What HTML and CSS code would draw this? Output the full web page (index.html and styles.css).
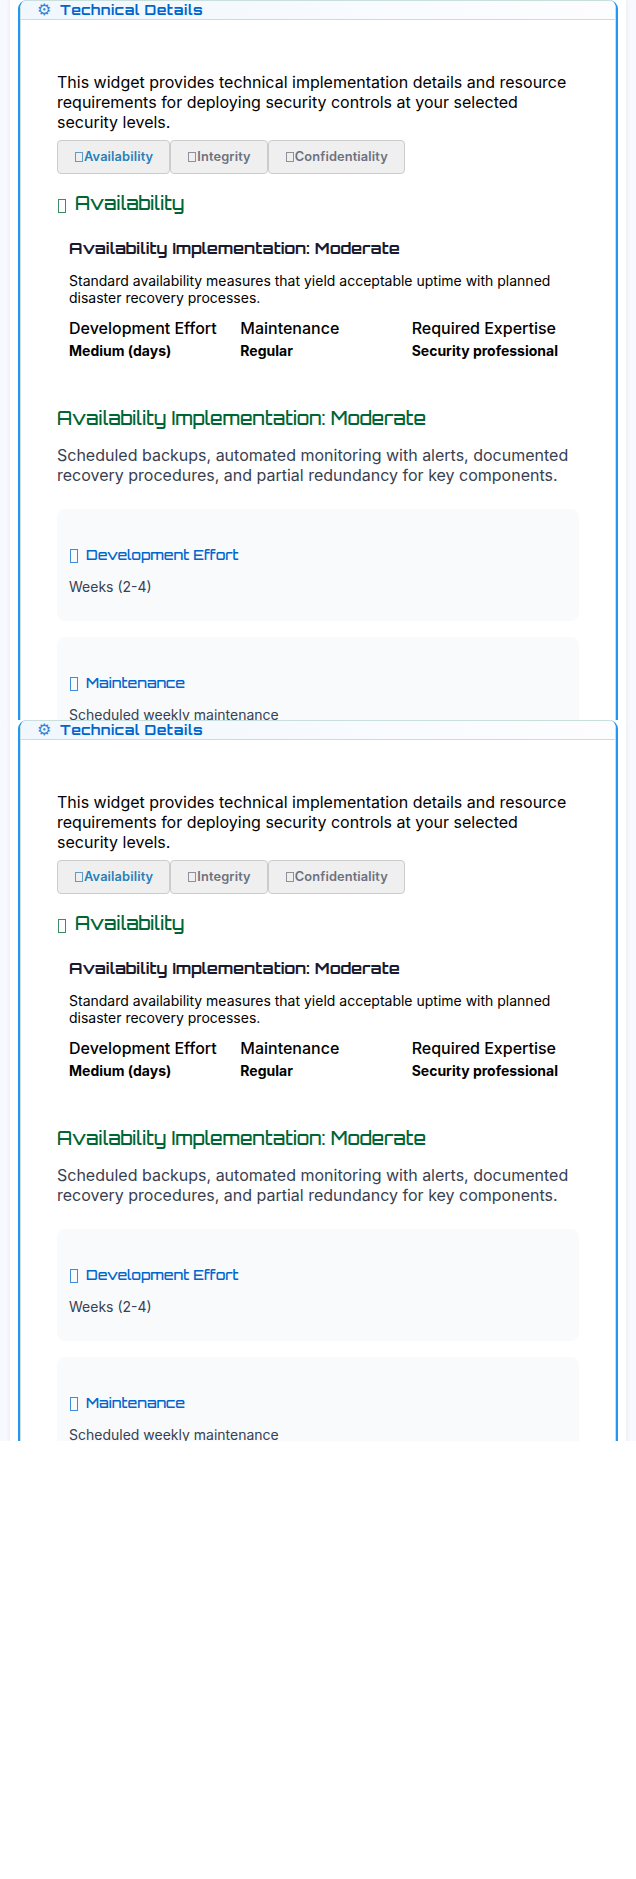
FILE: index.html
```
<!DOCTYPE html>
<html lang="en">
<head>
<meta charset="utf-8">
<title>Technical Details</title>
<link rel="stylesheet" href="styles.css">
</head>
<body>
<div class="view">
  <div class="page"><section class="frame"><div class="widget">
    <header class="bar"><span class="gear">⚙</span><h2 class="display bar-title">Technical Details</h2></header>
    <div class="content">
      <p class="intro">This widget provides technical implementation details and resource requirements for deploying security controls at your selected security levels.</p>
      <div class="tabs">
        <button class="tab active"><i class="box small"></i>Availability</button><button class="tab"><i class="box small"></i>Integrity</button><button class="tab"><i class="box small"></i>Confidentiality</button>
      </div>
      <h3 class="display section-title"><i class="box"></i><span>Availability</span></h3>
      <div class="summary">
        <h4 class="display summary-title">Availability Implementation: Moderate</h4>
        <p class="summary-text">Standard availability measures that yield acceptable uptime with planned disaster recovery processes.</p>
        <div class="metrics">
          <div><div class="label">Development Effort</div><div class="value">Medium (days)</div></div>
          <div><div class="label">Maintenance</div><div class="value">Regular</div></div>
          <div><div class="label">Required Expertise</div><div class="value">Security professional</div></div>
        </div>
      </div>
      <h3 class="display detail-title">Availability Implementation: Moderate</h3>
      <p class="detail-text">Scheduled backups, automated monitoring with alerts, documented recovery procedures, and partial redundancy for key components.</p>
      <div class="cards">
        <article class="card"><h4 class="display card-title"><i class="box"></i><span>Development Effort</span></h4><p class="card-text">Weeks (2-4)</p></article>
        <article class="card"><h4 class="display card-title"><i class="box"></i><span>Maintenance</span></h4><p class="card-text">Scheduled weekly maintenance</p></article>
      </div>
    </div>
  </div></section></div>
</div>
<div class="view last">
  <div class="page"><section class="frame"><div class="widget">
    <header class="bar"><span class="gear">⚙</span><h2 class="display bar-title">Technical Details</h2></header>
    <div class="content">
      <p class="intro">This widget provides technical implementation details and resource requirements for deploying security controls at your selected security levels.</p>
      <div class="tabs">
        <button class="tab active"><i class="box small"></i>Availability</button><button class="tab"><i class="box small"></i>Integrity</button><button class="tab"><i class="box small"></i>Confidentiality</button>
      </div>
      <h3 class="display section-title"><i class="box"></i><span>Availability</span></h3>
      <div class="summary">
        <h4 class="display summary-title">Availability Implementation: Moderate</h4>
        <p class="summary-text">Standard availability measures that yield acceptable uptime with planned disaster recovery processes.</p>
        <div class="metrics">
          <div><div class="label">Development Effort</div><div class="value">Medium (days)</div></div>
          <div><div class="label">Maintenance</div><div class="value">Regular</div></div>
          <div><div class="label">Required Expertise</div><div class="value">Security professional</div></div>
        </div>
      </div>
      <h3 class="display detail-title">Availability Implementation: Moderate</h3>
      <p class="detail-text">Scheduled backups, automated monitoring with alerts, documented recovery procedures, and partial redundancy for key components.</p>
      <div class="cards">
        <article class="card"><h4 class="display card-title"><i class="box"></i><span>Development Effort</span></h4><p class="card-text">Weeks (2-4)</p></article>
        <article class="card"><h4 class="display card-title"><i class="box"></i><span>Maintenance</span></h4><p class="card-text">Scheduled weekly maintenance</p></article>
      </div>
    </div>
  </div></section></div>
</div>
</body>
</html>
```
FILE: styles.css
```
* { box-sizing: border-box; }
body { margin: 0; background: #fff; color: #000; font: 16px/20px Inter, sans-serif; }
h2, h3, h4, p { margin: 0; }
.view { height: 720px; overflow: hidden; background: #f8f9fe; padding: 0 10px; }
.view.last { height: 721px; }
.page { background: #fff; padding: 0 8px; height: 800px; box-shadow: 0 0 5px rgba(0,0,0,.08); }
.frame { height: 800px; border: 2px solid #2196f3; border-top: 0; border-radius: 9px 9px 0 0; overflow: hidden; }
.widget { height: 800px; border: 1px solid #c8dfdc; border-radius: 7px 7px 0 0; }
.bar { height: 19px; border-bottom: 1px solid #c5dcf0; background: linear-gradient(90deg, #f0f7fe, #fdfdff); display: flex; align-items: center; padding-left: 16px; color: #0066cc; }
.gear { width: 23px; font: 16px/18px "DejaVu Sans", sans-serif; opacity: .8; }
.display { font-family: Orbitron, "DejaVu Sans", sans-serif; white-space: nowrap; }
.bar-title { font-size: 14px; line-height: 18px; font-weight: 700; letter-spacing: .5px; }
.content { padding: 52px 36px 0; }
.intro { height: 68px; }
.tabs { display: flex; }
.tab { height: 34px; border: 1px solid #ccc; border-radius: 4px; background: #efefef; padding: 0 16px; display: flex; align-items: center; color: #6b7280; font: 600 12.8px/16px Inter, sans-serif; letter-spacing: .14px; white-space: nowrap; }
.tab.active { color: #2980b9; }
.box { width: 8px; height: 14px; border: 1px solid currentColor; opacity: .75; flex: none; }
.box.small { width: 8px; height: 10px; margin: 0 1px; }
.section-title { display: flex; align-items: center; height: 28px; margin-top: 15px; padding-left: 1px; color: #006633; font-size: 18px; font-weight: 500; }
.section-title .box { margin: 5px 9px 0 0; }
.summary { padding: 20px 12px 0; height: 176px; }
.summary-title { color: #1a1a2e; font-size: 16px; line-height: 22px; font-weight: 700; }
.summary-text { margin-top: 13px; font-size: 14px; line-height: 17px; }
.metrics { display: grid; grid-template-columns: repeat(3, 1fr); gap: 16px; margin-top: 12px; }
.metrics > div { white-space: nowrap; }
.label { font-weight: 500; }
.value { font-size: 14px; font-weight: 700; line-height: 17px; margin-top: 4px; }
.detail-title { margin-top: 13px; color: #006633; font-size: 18px; line-height: 24px; font-weight: 500; }
.detail-text { color: #374151; margin-top: 15px; }
.cards { display: grid; gap: 16px; margin-top: 24px; }
.card { height: 112px; padding: 35px 12px 0; border-radius: 8px; background: #f8fafc; }
.card-title { display: flex; align-items: center; height: 22px; padding-left: 1px; color: #0066cc; font-size: 14px; font-weight: 500; }
.card-title .box { margin: 2px 8px 0 0; }
.card-text { margin-top: 12px; color: #374151; font-size: 14px; line-height: 17px; }
```
